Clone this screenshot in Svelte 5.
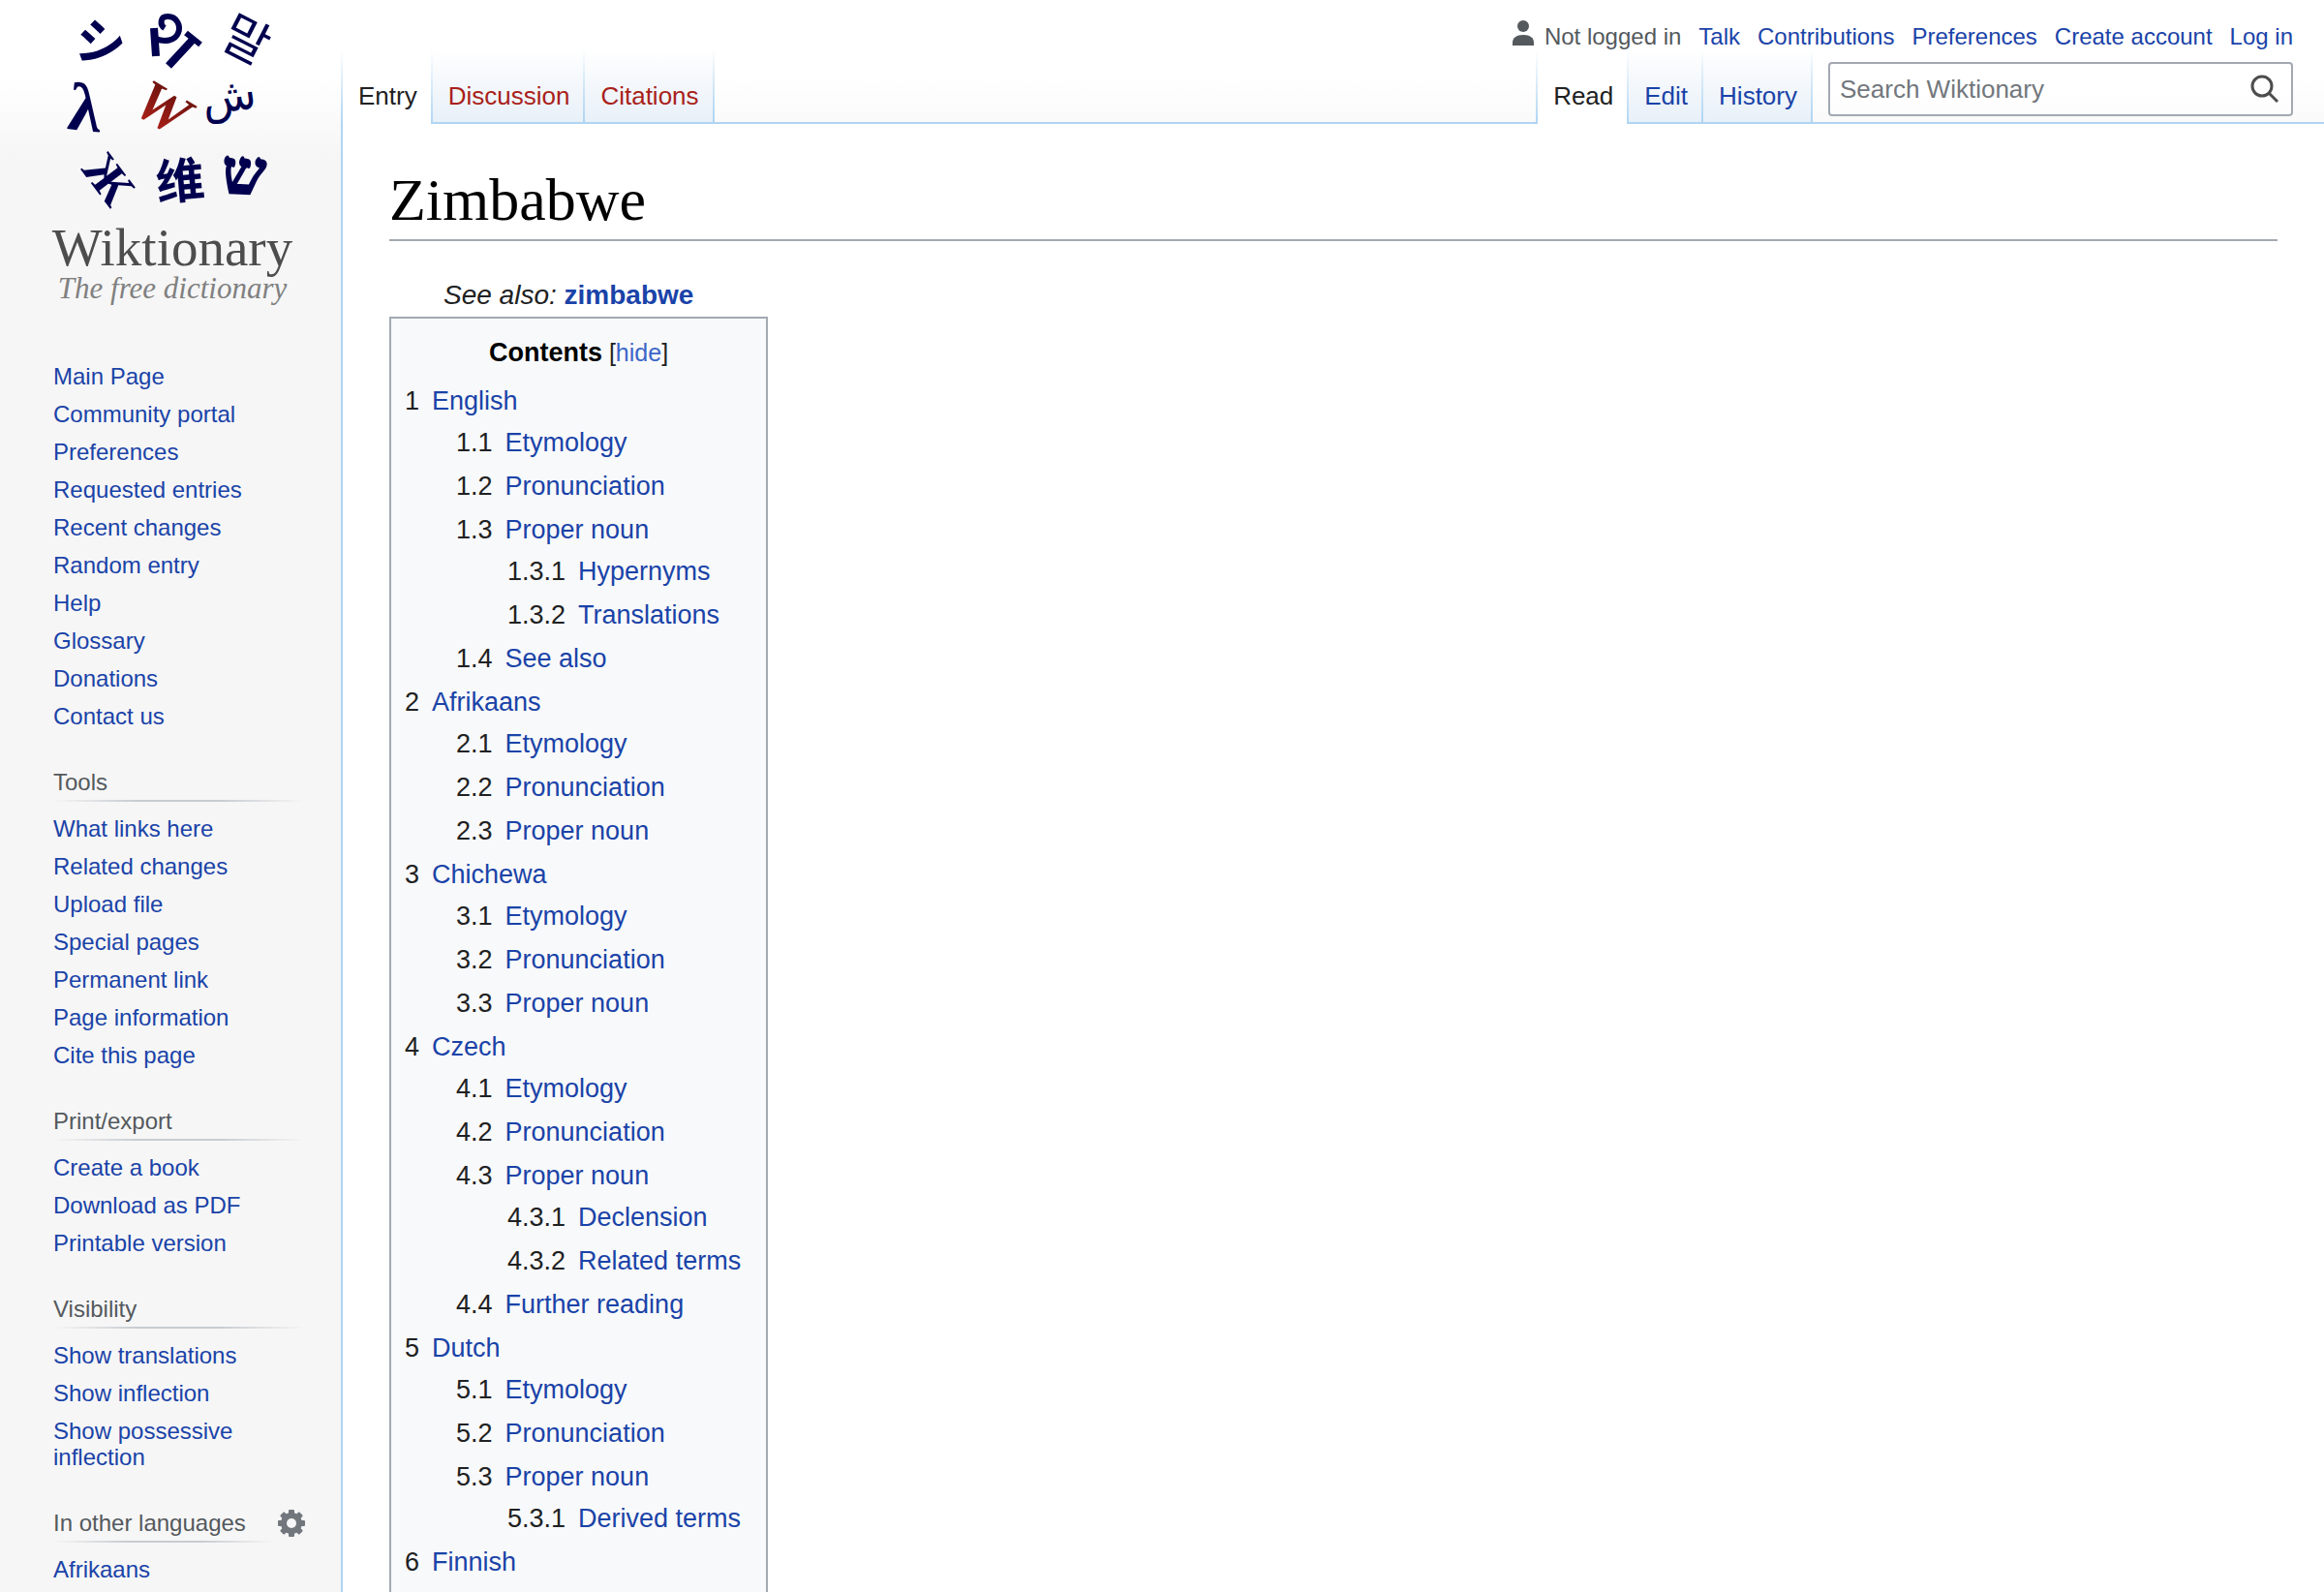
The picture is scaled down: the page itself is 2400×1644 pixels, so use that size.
<script>
  const mainLinks = ['Main Page', 'Community portal', 'Preferences', 'Requested entries', 'Recent changes', 'Random entry', 'Help', 'Glossary', 'Donations', 'Contact us'];
  const portals = [
    { title: 'Tools', links: ['What links here', 'Related changes', 'Upload file', 'Special pages', 'Permanent link', 'Page information', 'Cite this page'] },
    { title: 'Print/export', links: ['Create a book', 'Download as PDF', 'Printable version'] },
    { title: 'Visibility', links: ['Show translations', 'Show inflection', 'Show possessive inflection'] },
    { title: 'In other languages', links: ['Afrikaans'], settings: true }
  ];
  const personal = ['Talk', 'Contributions', 'Preferences', 'Create account', 'Log in'];
  const sub = (...names) => names.map((n) => (typeof n === 'string' ? { name: n, children: [] } : n));
  const toc = [
    { name: 'English', children: sub('Etymology', 'Pronunciation', { name: 'Proper noun', children: sub('Hypernyms', 'Translations') }, 'See also') },
    { name: 'Afrikaans', children: sub('Etymology', 'Pronunciation', 'Proper noun') },
    { name: 'Chichewa', children: sub('Etymology', 'Pronunciation', 'Proper noun') },
    { name: 'Czech', children: sub('Etymology', 'Pronunciation', { name: 'Proper noun', children: sub('Declension', 'Related terms') }, 'Further reading') },
    { name: 'Dutch', children: sub('Etymology', 'Pronunciation', { name: 'Proper noun', children: sub('Derived terms') }) },
    { name: 'Finnish', children: [] }
  ];
  let open = $state(true);
</script>

{#snippet entries(items, prefix)}
  <ul class="toc-list">
    {#each items as item, i}
      <li>
        <a class="toc-link" href="#{item.name}"><span class="num">{prefix}{i + 1}</span><span>{item.name}</span></a>
        {#if item.children.length}{@render entries(item.children, `${prefix}${i + 1}.`)}{/if}
      </li>
    {/each}
  </ul>
{/snippet}

<div class="page">
  <aside class="sidebar">
    <a class="logo" href="#main" aria-label="Wiktionary main page">
      <svg viewBox="0 0 352 320" width="352" height="320">
        <defs>
          <linearGradient id="red" x1="0" y1="0" x2="0" y2="1">
            <stop offset="0" stop-color="#5c100c" />
            <stop offset="1" stop-color="#b8231a" />
          </linearGradient>
        </defs>
        <g class="glyphs" text-anchor="middle">
          <text class="jp" x="104" y="63" font-size="52" transform="rotate(10 104 43)">シ</text>
          <text class="kr" x="254" y="59" font-size="51" transform="rotate(27 254 41)">말</text>
          <text class="serif" x="88" y="135" font-size="70" transform="rotate(6 88 112)">λ</text>
          <text class="serif w" x="168" y="131" font-size="60" transform="rotate(31 168 111)">W</text>
          <text class="arab" x="237" y="115" font-size="46" transform="rotate(-8 237 106)">ش</text>
          <text class="serif" x="112" y="202" font-size="52" transform="rotate(53 112 185)">Ж</text>
          <text class="cn" x="186" y="205" font-size="50" transform="rotate(-5 186 186)">维</text>
          <text class="serif heb" x="252" y="200" font-size="64" transform="rotate(3 252 179)">ש</text>
        </g>
        <g class="strokes">
          <path stroke-width="8" d="M159 29l2 29M199 41l-25 27" />
          <path stroke-width="6" d="M170 29c-5-3-5-12 3-12c10 0 14 10 11 17c-3 8-14 10-23 6" />
          <path stroke-width="6" d="M192 34l15 12" />
        </g>
        <text class="wordmark" x="178" y="274" font-size="55" text-anchor="middle">Wiktionary</text>
        <text class="tagline" x="178" y="308" font-size="31" text-anchor="middle">The free dictionary</text>
      </svg>
    </a>
    <nav class="portal first" aria-label="Navigation">
      <ul>{#each mainLinks as l}<li><a href="#nav">{l}</a></li>{/each}</ul>
    </nav>
    {#each portals as p}
      <nav class="portal" aria-label={p.title}>
        <div class="portal-head">
          <h3>{p.title}</h3>
          {#if p.settings}
            <button class="gear" aria-label="Language settings">
              <svg viewBox="0 0 28 28" width="28" height="28">
                <g fill="#72777d">
                  {#each [0, 45, 90, 135] as a}<rect x="11" y="0" width="6" height="28" rx="1" transform="rotate({a} 14 14)" />{/each}
                  <circle cx="14" cy="14" r="11" />
                </g>
                <circle cx="14" cy="14" r="5" fill="#f6f6f6" />
              </svg>
            </button>
          {/if}
        </div>
        <ul>{#each p.links as l}<li><a href="#nav">{l}</a></li>{/each}</ul>
      </nav>
    {/each}
  </aside>

  <div class="main">
    <header>
      <div class="personal">
        <svg viewBox="0 0 22 26" width="22" height="26" fill="#54595d"><circle cx="11" cy="6" r="6" /><path d="M0 26v-3c0-5 4-8 11-8s11 3 11 8v3z" /></svg>
        <span>Not logged in</span>
        {#each personal as l}<a href="#user">{l}</a>{/each}
      </div>
      <div class="bar">
        <nav class="tabs" aria-label="Namespaces">
          <a class="tab selected" href="#entry">Entry</a>
          <a class="tab new" href="#discussion">Discussion</a>
          <a class="tab new" href="#citations">Citations</a>
        </nav>
        <div class="filler"></div>
        <nav class="tabs" aria-label="Views">
          <a class="tab selected" href="#read">Read</a>
          <a class="tab" href="#edit">Edit</a>
          <a class="tab" href="#history">History</a>
        </nav>
        <div class="search-area">
          <form class="search" role="search">
            <input type="search" placeholder="Search Wiktionary" aria-label="Search Wiktionary" />
            <button type="button" aria-label="Search">
              <svg viewBox="0 0 30 30" width="30" height="30" fill="none" stroke="#4d4d4d" stroke-width="3"><circle cx="12" cy="12" r="10" /><path d="M19 19l9 9" /></svg>
            </button>
          </form>
        </div>
      </div>
    </header>
    <main>
      <h1>Zimbabwe</h1>
      <p class="see"><i>See also:</i> <a href="#zimbabwe"><b>zimbabwe</b></a></p>
      <div class="toc">
        <div class="toc-title"><h2>Contents</h2><span class="toggle">[<button onclick={() => (open = !open)}>{open ? 'hide' : 'show'}</button>]</span></div>
        {#if open}{@render entries(toc, '')}{/if}
      </div>
    </main>
  </div>
</div>

<style>
  :global(body) { margin: 0; background: #f6f6f6; }
  .page {
    --line: #afd5f3;
    display: grid;
    grid-template-columns: 352px 1fr;
    height: 100vh;
    overflow: hidden;
    color: #202122;
    font-family: "Liberation Sans", Arial, sans-serif;
    background: #f6f6f6 linear-gradient(#fff 50%, #f6f6f6) top / 100% 160px no-repeat;
  }
  a { color: #1a43a8; text-decoration: none; }
  ul { list-style: none; margin: 0; padding: 0; }
  h1, h2, h3 { margin: 0; font-weight: normal; }
  button { border: 0; padding: 0; background: none; font: inherit; cursor: pointer; }
  svg { display: block; overflow: visible; }

  .sidebar { font-size: 24px; line-height: 27px; }
  .glyphs { fill: #00004f; }
  .strokes { fill: none; stroke: #00004f; }
  .jp { font-family: "Liberation Sans", "Noto Sans CJK JP", sans-serif; font-weight: bold; }
  .kr { font-family: "Liberation Sans", "Noto Sans CJK KR", sans-serif; }
  .cn { font-family: "Liberation Sans", "Noto Sans CJK SC", sans-serif; font-weight: bold; }
  .arab { font-family: "DejaVu Sans", sans-serif; }
  .serif { font-family: "Liberation Serif", serif; font-weight: bold; }
  .heb { stroke: #00004f; stroke-width: 2; }
  .w { fill: url(#red); font-style: italic; }
  .wordmark { font-family: "Liberation Serif", serif; fill: #4d4d4d; }
  .tagline { font-family: "Liberation Serif", serif; font-style: italic; fill: #808080; }

  .portal { padding: 35px 37px 0 55px; }
  .portal.first { padding-top: 49px; }
  .portal li { padding: 6px 0; }
  .portal-head { display: flex; gap: 3px; margin-bottom: 8px; }
  h3 {
    flex: 1;
    padding-bottom: 7px;
    font-size: 24px;
    color: #54595d;
    background: linear-gradient(to right, #f6f6f6, #c8ccd1 33%, #c8ccd1 66%, #f6f6f6) bottom / 100% 2px no-repeat;
  }
  .gear { align-self: flex-start; }

  .main { display: flex; flex-direction: column; min-width: 0; }
  .personal {
    display: flex;
    justify-content: flex-end;
    align-items: center;
    gap: 18px;
    height: 27px;
    padding: 24px 32px 0 0;
    font-size: 24px;
    line-height: 27px;
    color: #54595d;
  }
  .personal svg { margin: -8px -7px 0 0; }
  .bar { display: flex; height: 77px; font-size: 26px; line-height: 30px; }
  .tabs {
    display: flex;
    padding-left: 2px;
    background: linear-gradient(#fff0, var(--line)) left / 2px 100% no-repeat;
  }
  .tab {
    box-sizing: border-box;
    padding: 33px 16px 0;
    border-bottom: 2px solid var(--line);
    background:
      linear-gradient(#fff0, var(--line)) right / 2px 100% no-repeat,
      linear-gradient(#fff, #e8f0f8);
  }
  .tab.selected {
    color: #202122;
    border-bottom: 0;
    background: linear-gradient(#fff0, var(--line)) right / 2px 100% no-repeat, #fff;
  }
  .new { color: #a91f1a; }
  .filler { flex: 1; border-bottom: 2px solid var(--line); }
  .search-area { padding: 13px 32px 0 16px; border-bottom: 2px solid var(--line); }
  .search {
    box-sizing: border-box;
    display: flex;
    align-items: center;
    width: 20vw;
    min-width: 280px;
    height: 56px;
    padding: 0 12px 0 10px;
    border: 2px solid #a2a9b1;
    border-radius: 4px;
    background: #ffffff80;
  }
  input {
    flex: 1;
    min-width: 0;
    padding: 0;
    border: 0;
    outline: 0;
    background: none;
    font: inherit;
    color: inherit;
  }
  input::placeholder { color: #72777d; opacity: 1; }

  main { flex: 1; padding: 40px 48px 0; border-left: 2px solid var(--line); background: #fff; }
  h1 {
    padding-bottom: 3px;
    border-bottom: 2px solid #a2a9b1;
    font: 62px/76px "Liberation Serif", serif;
    color: #000;
  }
  .see { margin: 33px 0 0 56px; font-size: 28px; line-height: 45px; }
  .toc {
    display: inline-block;
    box-sizing: border-box;
    min-width: 391px;
    padding: 14px;
    border: 2px solid #a2a9b1;
    background: #f8f9fa;
    font-size: 27px;
    line-height: 43px;
  }
  .toc-title { display: flex; justify-content: center; align-items: baseline; gap: 7px; margin-bottom: 7px; }
  h2 { font-size: 27px; font-weight: bold; color: #000; }
  .toggle { font-size: 25px; }
  .toggle button { color: #3c66c8; }
  .toc-list li { margin-bottom: 2px; }
  .toc-list .toc-list { margin-left: 53px; }
  .toc-link { display: flex; gap: 13px; }
  .num { color: #202122; }
</style>
